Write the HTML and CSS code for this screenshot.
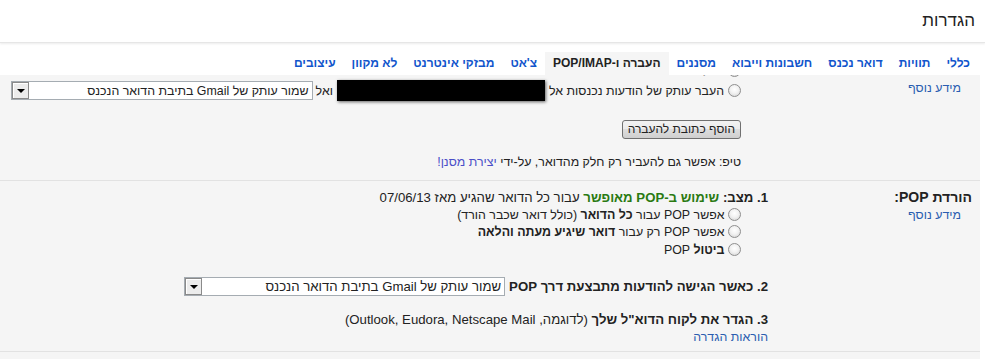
FILE: index.html
```html
<!DOCTYPE html>
<html lang="he" dir="rtl">
<head>
<meta charset="utf-8">
<title>הגדרות</title>
<link rel="stylesheet" href="styles.css">
</head>
<body>
<header class="hdr"><h1 class="title">הגדרות</h1></header>
<nav class="tabs">
  <a class="tab" href="#">כללי</a>
  <a class="tab" href="#">תוויות</a>
  <a class="tab" href="#">דואר נכנס</a>
  <a class="tab" href="#">חשבונות וייבוא</a>
  <a class="tab" href="#">מסננים</a>
  <span class="tab tab-sel">העברה ו-POP/IMAP</span>
  <a class="tab" href="#">צ'אט</a>
  <a class="tab" href="#">מבזקי אינטרנט</a>
  <a class="tab" href="#">לא מקוון</a>
  <a class="tab" href="#">עיצובים</a>
</nav>
<main class="panel">
  <section class="sec fwd">
    <div class="lab"><a class="more" href="#">מידע נוסף</a></div>
    <div class="cnt">
      <div class="clip"><div class="ln"><span class="radio"></span> בטל העברה</div></div>
      <div class="opt">
        <span class="radio"></span>
        <span>העבר עותק של הודעות נכנסות אל</span>
        <span class="redact"></span>
        <span>ואל</span>
        <span class="selbox"><span class="seltxt">שמור עותק של Gmail בתיבת הדואר הנכנס</span><span class="selbtn"><span class="tri"></span></span></span>
      </div>
      <div><button class="btn" type="button">הוסף כתובת להעברה</button></div>
      <div class="tip">טיפ: אפשר גם להעביר רק חלק מהדואר, על-ידי <a class="tiplink" href="#">יצירת מסנן!</a></div>
    </div>
  </section>
  <section class="sec pop">
    <div class="lab">
      <div class="labtitle">הורדת POP:</div>
      <a class="more" href="#">מידע נוסף</a>
    </div>
    <div class="cnt">
      <div class="ln num"><b>1. מצב: </b><b class="green">שימוש ב-POP מאופשר</b> עבור כל הדואר שהגיע מאז 07/06/13</div>
      <div class="ind">
        <div class="ln"><span class="radio"></span> אפשר POP עבור <b>כל הדואר</b> (כולל דואר שכבר הורד)</div>
        <div class="ln"><span class="radio"></span> אפשר POP רק עבור <b>דואר שיגיע מעתה והלאה</b></div>
        <div class="ln"><span class="radio"></span> <b>ביטול</b> POP</div>
      </div>
      <div class="opt num row2">
        <b>2. כאשר הגישה להודעות מתבצעת דרך POP</b>
        <span class="selbox"><span class="seltxt">שמור עותק של Gmail בתיבת הדואר הנכנס</span><span class="selbtn"><span class="tri"></span></span></span>
      </div>
      <div class="ln num row3"><b>3. הגדר את לקוח הדוא"ל שלך</b> (לדוגמה, Outlook, Eudora, Netscape Mail)</div>
      <div class="ln"><a class="more" href="#">הוראות הגדרה</a></div>
    </div>
  </section>
</main>
</body>
</html>
```

FILE: styles.css
```css
* { box-sizing: border-box; }
html, body { margin: 0; padding: 0; }
body {
  background: #fff;
  font-family: "Liberation Sans", Arial, sans-serif;
  font-size: 12.4px;
  color: #222;
  width: 985px;
  height: 359px;
  overflow: hidden;
}
.hdr {
  height: 43px;
  border-bottom: 1px solid #e6e6e6;
  box-shadow: 0 1px 2px rgba(0,0,0,0.08);
  padding-right: 10px;
  display: flex;
  align-items: center;
}
.title {
  margin: 0;
  font-size: 17px;
  font-weight: normal;
  color: #222;
}
.tabs {
  display: flex;
  margin: 9px 5px 0 0;
  padding-right: 2px;
  height: 23px;
}
.tab {
  padding: 0 8px;
  line-height: 23px;
  font-size: 12px;
  font-weight: bold;
  color: #15c;
  text-decoration: none;
  white-space: nowrap;
}
.tab-sel { background: #f5f5f5; color: #222; }
.panel {
  background: #f5f5f5;
  margin-right: 5px;
  height: 284px;
}
.sec {
  display: grid;
  grid-template-columns: 212px 1fr;
  border-bottom: 1px solid #e2e2e2;
}
.lab { padding-right: 8px; }
.more { color: #2a5db0; text-decoration: none; }
.lab .more { display: block; padding-right: 11px; line-height: 17px; font-size: 12.4px; }
.fwd .lab { padding-top: 5px; }
.fwd .cnt { padding-right: 27px; padding-bottom: 9px; }
.clip { height: 5px; overflow: hidden; display: flex; align-items: flex-end; }
.ln { line-height: 17.5px; white-space: nowrap; }
.clip .ln { line-height: 17px; flex: none; }
.num { font-size: 13.2px; }
.radio {
  display: inline-block;
  width: 13px;
  height: 13px;
  border-radius: 50%;
  border: 1px solid #8f8f8f;
  background: radial-gradient(circle at 50% 40%, #ffffff 0, #f2f2f2 45%, #cfcfcf 100%);
  vertical-align: -2px;
}
.opt {
  display: flex;
  align-items: center;
  height: 21px;
  white-space: nowrap;
}
.opt .radio { margin-left: 4px; flex: none; }
.redact {
  width: 208px;
  height: 21px;
  background: #000;
  box-shadow: 1px 1px 3px rgba(0,0,0,0.6);
  margin: 0 4px;
  flex: none;
}
.selbox {
  display: flex;
  align-items: center;
  width: 24.3em;
  height: 19px;
  border: 1px solid #a5acb2;
  background: #fff;
  margin-right: 3px;
  flex: none;
}
.seltxt { flex: 1; padding-right: 3px; white-space: nowrap; overflow: hidden; }
.selbtn {
  flex: none;
  width: 17px;
  height: 17px;
  background: #ececec;
  border: 1px solid #8a8a8a;
  box-shadow: inset 1px 1px 0 #fff;
  display: flex;
  align-items: center;
  justify-content: center;
}
.tri {
  width: 0;
  height: 0;
  border-left: 4px solid transparent;
  border-right: 4px solid transparent;
  border-top: 4px solid #000;
  margin-top: 1px;
}
.btn {
  margin-top: 19px;
  height: 19px;
  padding: 0 5px;
  border: 1px solid #707070;
  border-radius: 3px;
  background: linear-gradient(#f2f2f2, #ebebeb 50%, #dddddd 50%, #cfcfcf);
  font-family: "Liberation Sans", Arial, sans-serif;
  font-size: 12px;
  color: #222;
  line-height: 15px;
}
.tip { margin-top: 15px; line-height: 17px; }
.tiplink { color: #4b4fc8; text-decoration: none; }
.pop .lab { padding-top: 8px; }
.labtitle { font-weight: bold; font-size: 14px; line-height: 17.5px; }
.pop .cnt { padding-top: 8px; padding-bottom: 5px; }
.green { color: #2a7a12; }
.ind { padding-right: 27px; }
.row2 { margin-top: 17px; }
.row2 .selbox { margin-right: 4px; }
.row3 { margin-top: 14px; }
```
